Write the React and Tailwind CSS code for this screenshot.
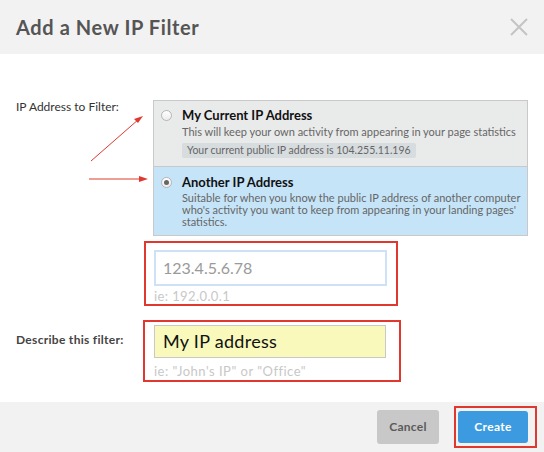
import React from "react";

function Radio({ checked }) {
  return (
    <div className="w-[11px] h-[11px] rounded-full border border-[#b5b5b5] bg-gradient-to-b from-white to-[#ececec] flex items-center justify-center shrink-0">
      {checked && <div className="w-[5px] h-[5px] rounded-full bg-[#666]" />}
    </div>
  );
}

export default function App() {
  return (
    <div
      className="relative w-[544px] h-[452px] flex flex-col bg-white overflow-hidden"
      style={{ fontFamily: "Lato, 'Open Sans', sans-serif" }}
    >
      {/* Header */}
      <div className="h-[54px] shrink-0 bg-[#f2f2f2] flex items-center justify-between pl-4 pr-4">
        <div className="text-[20px] font-bold text-[#555] tracking-[0.6px]">Add a New IP Filter</div>
        <svg width="18" height="18" viewBox="0 0 18 18">
          <path d="M1 1 L17 17 M17 1 L1 17" stroke="#c4c4c4" strokeWidth="2" />
        </svg>
      </div>

      {/* Body */}
      <div className="flex-1 flex flex-col pt-[46px]">
        <div className="flex">
          <div className="w-[153px] shrink-0 pl-4 text-[12px] text-[#333] leading-[14px]">IP Address to Filter:</div>
          <div className="w-[375px] border border-[#c9c9c9] flex flex-col">
            <div className="bg-[#e9eaea] flex pt-[6px] pb-[8px] pl-[7px]">
              <div className="pt-[3px]"><Radio /></div>
              <div className="ml-[10px] flex flex-col items-start">
                <div className="text-[13px] font-bold text-[#111] leading-[16px]">My Current IP Address</div>
                <div className="mt-[2px] text-[11px] text-[#666] leading-[14px]">This will keep your own activity from appearing in your page statistics</div>
                <div className="mt-[4px] bg-[#d7dcdf] rounded-[2px] px-[5px] text-[10.5px] text-[#666] leading-[15px]">Your current public IP address is 104.255.11.196</div>
              </div>
            </div>
            <div className="bg-[#c5e4f8] border-t border-[#c9c9c9] flex pt-[7px] pb-[7px] pl-[7px]">
              <div className="pt-[3px]"><Radio checked /></div>
              <div className="ml-[10px] flex flex-col items-start pr-1">
                <div className="text-[13px] font-bold text-[#111] leading-[16px]">Another IP Address</div>
                <div className="mt-[2px] text-[11px] text-[#666] leading-[12px]">
                  Suitable for when you know the public IP address of another computer who's activity you want to keep from appearing in your landing pages' statistics.
                </div>
              </div>
            </div>
          </div>
        </div>

        {/* IP input */}
        <div className="ml-[154px] mt-[14px] relative w-[233px]">
          <div className="h-[36px] border-2 border-[#cfe1f7] bg-white flex items-center pl-[7px] text-[16px] text-[#9a9a9a]">123.4.5.6.78</div>
          <div className="mt-[3px] text-[13px] leading-[14px] text-[#c8c8c8] tracking-[0.4px]">ie: 192.0.0.1</div>
          <div className="absolute -left-[10px] -right-[11px] -top-[9px] -bottom-[3px] border-2 border-[#e0382f] pointer-events-none" />
        </div>

        {/* Describe */}
        <div className="flex mt-[22px]">
          <div className="w-[154px] shrink-0 pl-4 pt-[8px] text-[12px] font-bold text-[#444] leading-[14px] tracking-[0.3px]">Describe this filter:</div>
          <div className="relative w-[232px]">
            <div className="h-[33px] border border-[#c8c8c8] bg-[#f8f9bb] flex items-center pl-[8px] text-[18px] text-[#111] tracking-[0.3px]">My IP address</div>
            <div className="mt-[6px] text-[13px] leading-[14px] text-[#c8c8c8] tracking-[0.5px]">ie: "John's IP" or "Office"</div>
            <div className="absolute -left-[11px] -right-[15px] -top-[5px] -bottom-[4px] border-2 border-[#e0382f] pointer-events-none" />
          </div>
        </div>
      </div>

      {/* Footer */}
      <div className="h-[50px] shrink-0 bg-[#f2f2f2] flex items-center justify-end pr-4 gap-[19px]">
        <button className="w-[62px] h-[34px] rounded-[3px] bg-[#c8c8c8] text-[12px] font-bold text-[#5a5a5a] tracking-[0.3px]">Cancel</button>
        <div className="relative">
          <button className="w-[70px] h-[32px] rounded-[3px] bg-[#3c9ae0] text-[12px] font-bold text-white tracking-[0.3px] block">Create</button>
          <div className="absolute -left-[4px] -right-[9px] -top-[5px] -bottom-[5px] border-2 border-[#e0382f] pointer-events-none" />
        </div>
      </div>

      {/* Arrows annotation */}
      <svg className="absolute left-0 top-0 pointer-events-none" width="544" height="452">
        <line x1="91" y1="161" x2="139" y2="119" stroke="#e0382f" strokeWidth="1" />
        <polygon points="143,116 134,119 138,123" fill="#e0382f" />
        <line x1="89" y1="179" x2="142" y2="179" stroke="#e0382f" strokeWidth="1" />
        <polygon points="148,179 139,176 139,182" fill="#e0382f" />
      </svg>
    </div>
  );
}
